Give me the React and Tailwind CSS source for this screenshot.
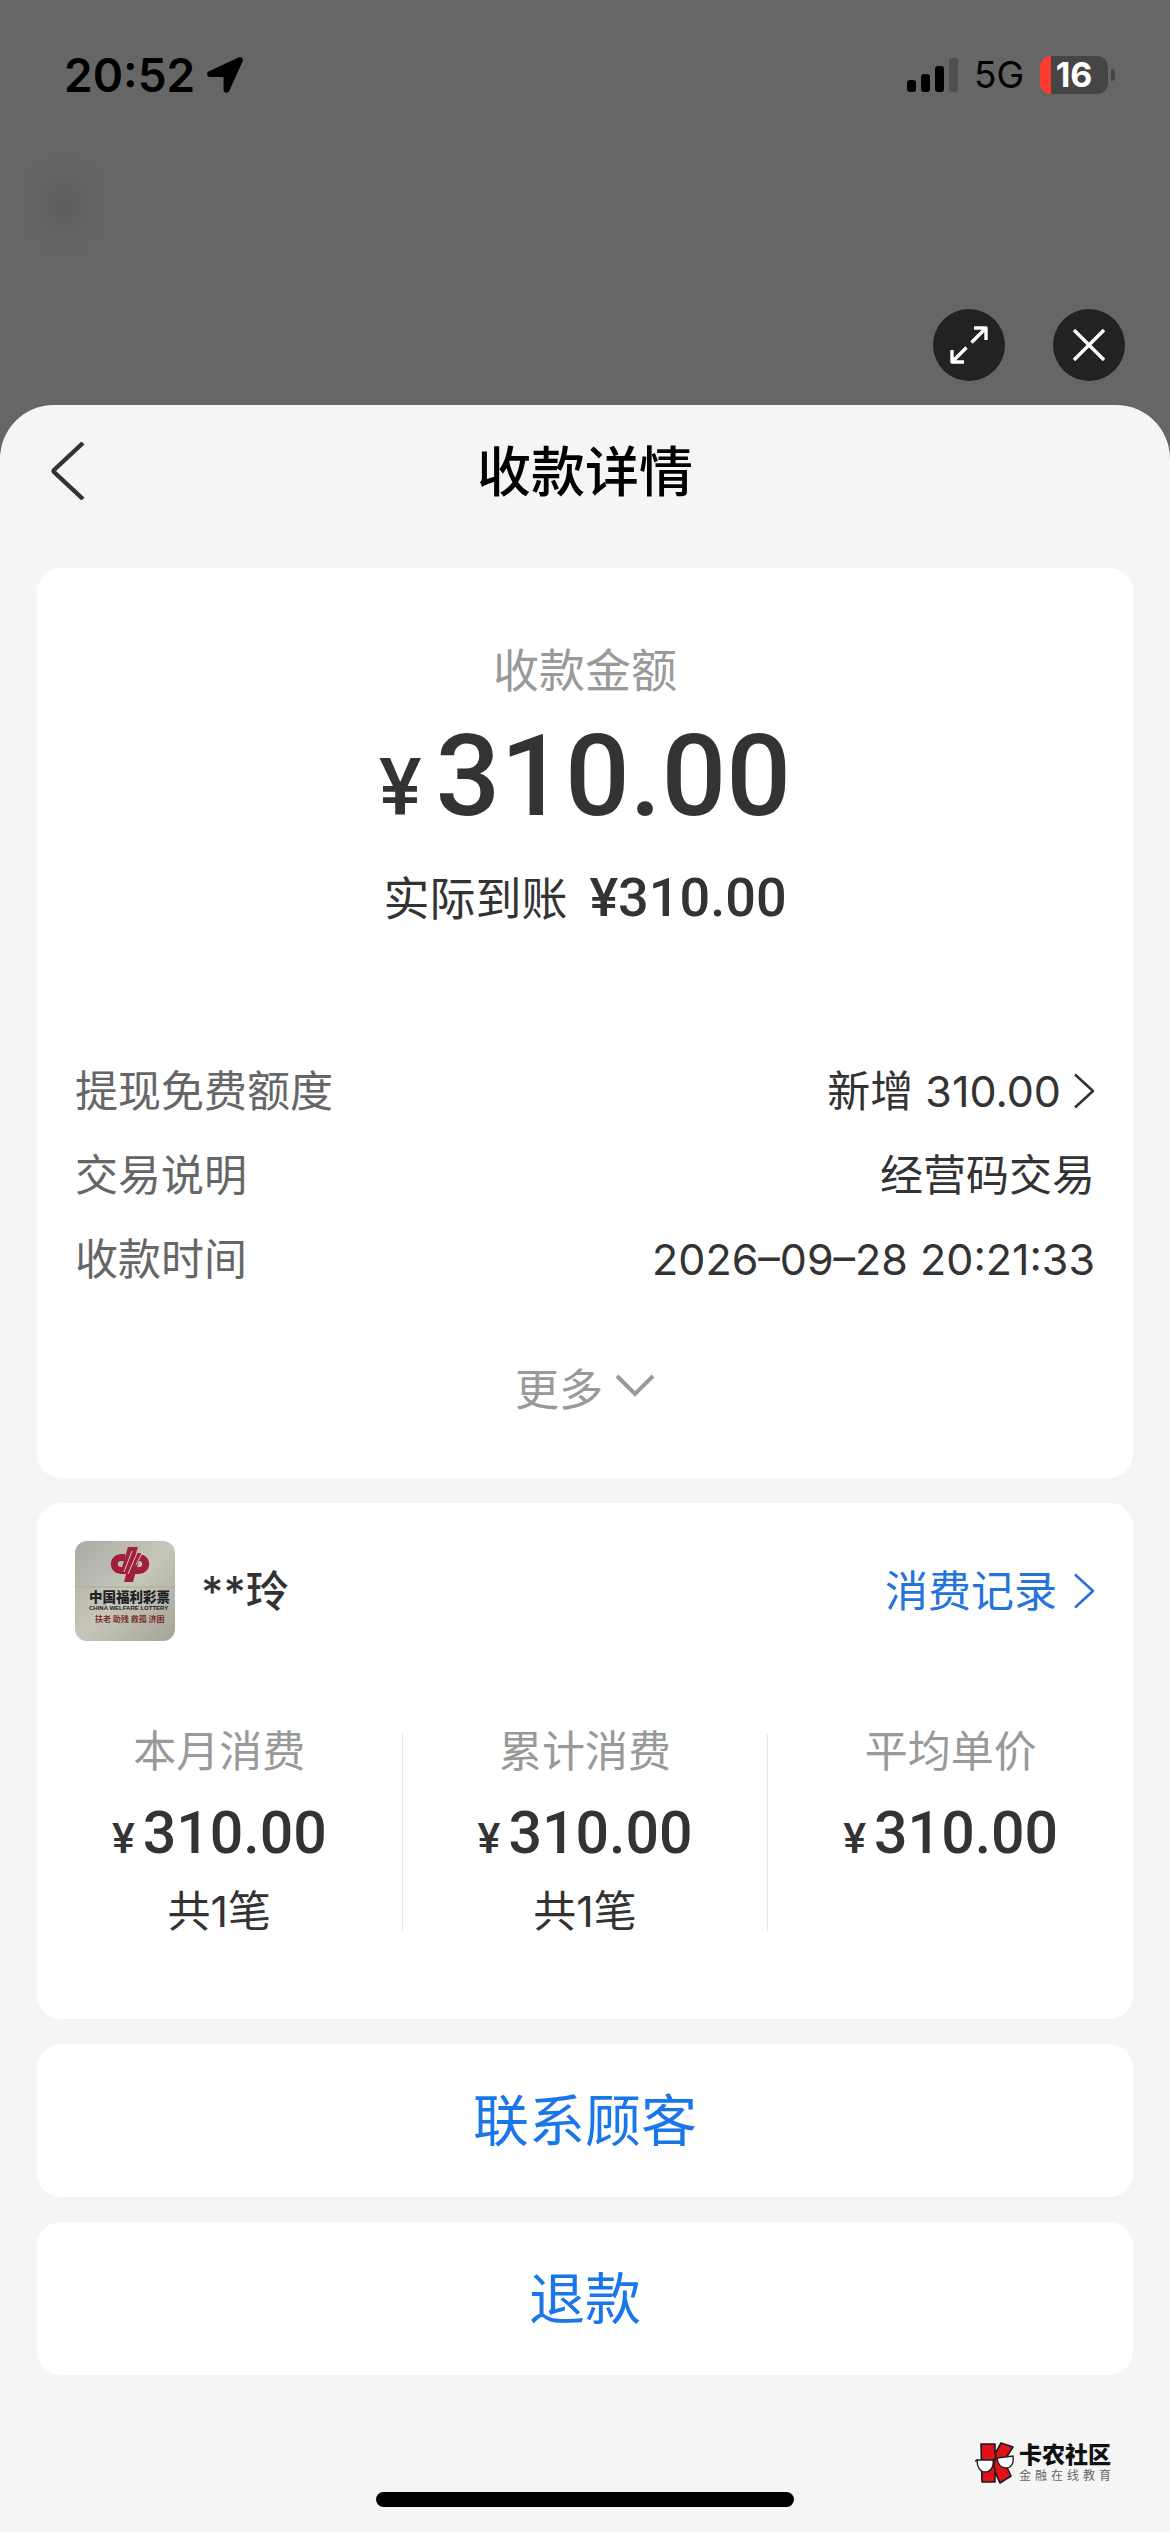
import React from "react";

const DETAILS = [
  { label: "提现免费额度", value: "新增 310.00", link: true },
  { label: "交易说明", value: "经营码交易" },
  { label: "收款时间", value: "2026–09–28 20:21:33" },
];

const STATS = [
  { label: "本月消费", amount: "310.00", count: "共1笔" },
  { label: "累计消费", amount: "310.00", count: "共1笔" },
  { label: "平均单价", amount: "310.00", count: "" },
];

function ChevronRight() {
  return (
    <svg width="22" height="36" viewBox="0 0 22 36" fill="none" stroke="currentColor" strokeWidth="2.6" aria-hidden="true">
      <path d="M2 1.500 L20 18 L2 34.500" strokeLinejoin="round" />
    </svg>
  );
}

function StatusBar() {
  return (
    <div className="flex h-[150px] items-center justify-between pl-[64px] pr-[55px] text-black">
      <div className="flex items-center gap-3">
        <span className="font-['Inter','Noto_Sans_CJK_SC',sans-serif] text-[46px] font-semibold leading-[56px]">20:52</span>
        <svg width="36" height="36" viewBox="0 0 36 36" aria-hidden="true">
          <path d="M31.5 .6 C34.6 -.7 36.7 1.6 35.5 4.6 L22.2 34 C21 36.6 16.6 36.2 16.6 33 V21.4 C16.6 20.4 16 20 15.2 20 H3 C-.4 20 -1 15.6 2 14.3 Z" fill="black" />
        </svg>
      </div>
      <div className="flex items-center">
        <svg width="52" height="36" viewBox="0 0 52 36" aria-hidden="true">
          <rect x="0" y="23" width="9" height="12" rx="3" fill="black" />
          <rect x="14" y="17" width="9" height="18" rx="3" fill="black" />
          <rect x="28" y="9" width="9" height="26" rx="3" fill="black" />
          <rect x="42" y="1" width="9" height="34" rx="3" fill="#4f4f4f" />
        </svg>
        <span className="ml-[15px] font-['Inter',sans-serif] text-[37px] leading-[44px]">5G</span>
        <div className="ml-[16px] flex h-[38px] w-[68px] items-center justify-center rounded-[11px] bg-[linear-gradient(to_right,#ff3b30_11px,#454545_11px)]">
          <span className="font-['Inter',sans-serif] text-[34px] font-bold leading-[38px] text-white">16</span>
        </div>
        <div className="ml-[3px] h-3 w-1 rounded-r-full bg-[#454545]" />
      </div>
    </div>
  );
}

function Avatar() {
  return (
    <svg className="rounded-xl" width="100" height="100" viewBox="0 0 100 100" role="img" aria-label="中国福利彩票">
      <defs>
        <linearGradient id="wall" x1="0" y1="0" x2="1" y2="1">
          <stop offset="0" stopColor="#a9aaa2" />
          <stop offset=".5" stopColor="#c6c6ba" />
          <stop offset="1" stopColor="#a3a397" />
        </linearGradient>
      </defs>
      <rect width="100" height="100" fill="url(#wall)" />
      <path d="M0 46 H100" stroke="#b3a99a" strokeWidth="1" />
      <g fill="none" stroke="#a01f3f" strokeWidth="7">
        <path d="M50 16.500 H46 C37 17 37 29 46 29.500 H50" />
        <path d="M60 16.500 H64 C73 17 73 29 64 29.500 H58" />
      </g>
      <path d="M53 6 H63 L61 12 H66 L58 41 H49 L51 33 H45 Z" fill="#a01f3f" />
      <path d="M57 10 L49 31 M62 12 L53 33 M69 8 L61 24" stroke="#d9c6c2" strokeWidth="1" />
      <text x="14" y="61" fontSize="13.5" fontWeight="900" fill="#1e2222" fontFamily="'Noto Sans CJK SC', sans-serif">中国福利彩票</text>
      <text x="14" y="69" fontSize="6" fontWeight="800" fill="#1e2222" fontFamily="'Liberation Sans', sans-serif">CHINA WELFARE LOTTERY</text>
      <text x="20" y="81" fontSize="8" fontWeight="700" fill="#7c2e2c" fontFamily="'Noto Sans CJK SC', sans-serif">扶老 助残 救孤 济困</text>
    </svg>
  );
}

function Watermark() {
  return (
    <div className="flex items-center gap-1">
      <svg width="40" height="42" viewBox="0 0 40 42" aria-hidden="true">
        <path d="M6 2 H20 V12 L26 1 L38 5 L29 19 L36 34 L25 41 L20 30 V40 H7 Z" fill="#e01219" stroke="#1a1a1a" strokeWidth="1.6" strokeLinejoin="round" />
        <path d="M21 12 L19 24 L21 32" stroke="#1a1a1a" strokeWidth="1.4" fill="none" />
        <path d="M2 18 H18 C19 26 15 30 10 30 C5 30 2 25 2 18 Z M22 16 L38 14 C39 22 36 26 31 26 C26 26 23 23 22 16 Z" fill="#fff" stroke="#222" strokeWidth="1.4" />
        <path d="M18 18 L22 16 M0 19 L3 18" stroke="#222" strokeWidth="1.4" />
      </svg>
      <div className="flex flex-col">
        <span className="text-[23px] font-black leading-[25px] text-[#111]">卡农社区</span>
        <span className="flex justify-between text-[12px] leading-[15px] text-[#666]">
          {"金融在线教育".split("").map((c) => (
            <span key={c}>{c}</span>
          ))}
        </span>
      </div>
    </div>
  );
}

export default function App() {
  return (
    <div className="flex min-h-screen w-full flex-col bg-[#666666] font-['Inter','Noto_Sans_CJK_SC',sans-serif] text-[#333333]">
      <StatusBar />
      <div className="flex h-[110px] items-center pl-[50px]">
        <div className="h-[44px] w-[28px] rounded-full bg-[#595959] blur-[14px]" />
      </div>
      <div className="flex h-[145px] justify-end gap-12 pr-[45px] pt-[49px]">
        <button type="button" aria-label="展开" className="flex h-[72px] w-[72px] items-center justify-center rounded-full bg-[#222222]">
          <svg width="38" height="38" viewBox="0 0 38 38" fill="none" stroke="white" strokeWidth="3.400" aria-hidden="true">
            <path d="M21.500 16.500 L35 3 M24 2 H36 V14" strokeLinejoin="round" />
            <path d="M16.500 21.500 L3 35 M2 24 V36 H14" strokeLinejoin="round" />
          </svg>
        </button>
        <button type="button" aria-label="关闭" className="flex h-[72px] w-[72px] items-center justify-center rounded-full bg-[#222222]">
          <svg width="32" height="32" viewBox="0 0 32 32" stroke="white" strokeWidth="3.400" aria-hidden="true">
            <path d="M1 1 L31 31 M31 1 L1 31" />
          </svg>
        </button>
      </div>

      <main className="flex flex-1 flex-col rounded-t-[54px] bg-[#f5f5f5] px-[37px]">
        <header className="grid h-[163px] grid-cols-[60px_1fr_60px] items-start pt-[34px]">
          <button type="button" aria-label="返回" className="flex h-16 items-center pl-3">
            <svg width="36" height="58" viewBox="0 0 36 58" fill="none" stroke="#333" strokeWidth="4.400" aria-hidden="true">
              <path d="M34 1 L5 28 Q4 29 5 30 L34 57" />
            </svg>
          </button>
          <h1 className="text-center text-[54px] font-medium leading-[68px] text-black">收款详情</h1>
        </header>

        <section className="flex flex-col rounded-3xl bg-white px-[38px] pb-[56px] pt-[70px]">
          <p className="text-center text-[46px] leading-[64px] text-[#999999]">收款金额</p>
          <p className="mt-2 flex h-[132px] items-baseline justify-center gap-[14px] font-['Roboto',sans-serif] font-medium">
            <span className="text-[80px] leading-[80px]">¥</span>
            <span className="text-[114px] leading-[132px]">310.00</span>
          </p>
          <p className="mt-[24px] flex items-center justify-center gap-[22px]">
            <span className="text-[46px] leading-[64px]">实际到账</span>
            <span className="font-['Roboto',sans-serif] text-[54px] font-medium leading-[64px]">¥310.00</span>
          </p>
          <dl className="mt-[119px] text-[43px] leading-[84px]">
            {DETAILS.map((d) => (
              <div key={d.label} className="flex items-center justify-between">
                <dt className="text-[#666666]">{d.label}</dt>
                <dd className="flex items-center gap-3">
                  {d.value}
                  {d.link && <ChevronRight />}
                </dd>
              </div>
            ))}
          </dl>
          <button type="button" className="mt-[57px] flex items-center justify-center gap-3 text-[44px] leading-[64px] text-[#999999]">
            更多
            <svg width="40" height="32" viewBox="0 0 40 32" fill="none" stroke="currentColor" strokeWidth="4" aria-hidden="true">
              <path d="M2 2 L20 20 L38 2" />
            </svg>
          </button>
        </section>

        <section className="mt-[25px] rounded-3xl bg-white pb-[76px] pt-[38px]">
          <div className="flex items-center px-[38px]">
            <Avatar />
            <span className="ml-[26px] text-[43px] font-medium leading-[64px]">**玲</span>
            <a href="#records" className="ml-auto flex items-center gap-4 text-[43px] leading-[64px] text-[#2474db]">
              消费记录
              <ChevronRight />
            </a>
          </div>
          <div className="mt-[78px] flex">
            {STATS.map((s, i) => (
              <React.Fragment key={s.label}>
                {i > 0 && <div className="mb-3 mt-[15px] w-px bg-[#e5e5e5]" />}
                <div className="flex flex-1 flex-col items-center gap-4 text-[43px] leading-[64px]">
                  <span className="text-[#999999]">{s.label}</span>
                  <span className="flex h-16 items-baseline gap-[8px] font-['Roboto',sans-serif] font-medium">
                    <span className="text-[43px] leading-[46px]">¥</span>
                    <span className="text-[59px] leading-[68px]">{s.amount}</span>
                  </span>
                  <span className="h-16">{s.count}</span>
                </div>
              </React.Fragment>
            ))}
          </div>
        </section>

        <button type="button" className="mt-[25px] h-[153px] rounded-3xl bg-white text-[56px] text-[#1a77ea]">联系顾客</button>
        <button type="button" className="mt-[25px] h-[153px] rounded-3xl bg-white text-[56px] text-[#1a77ea]">退款</button>

        <footer className="mt-auto flex flex-col pb-[25px]">
          <div className="flex justify-end pr-[22px]">
            <Watermark />
          </div>
          <div className="mt-[8px] h-[15px] w-[418px] self-center rounded-full bg-black" />
        </footer>
      </main>
    </div>
  );
}
